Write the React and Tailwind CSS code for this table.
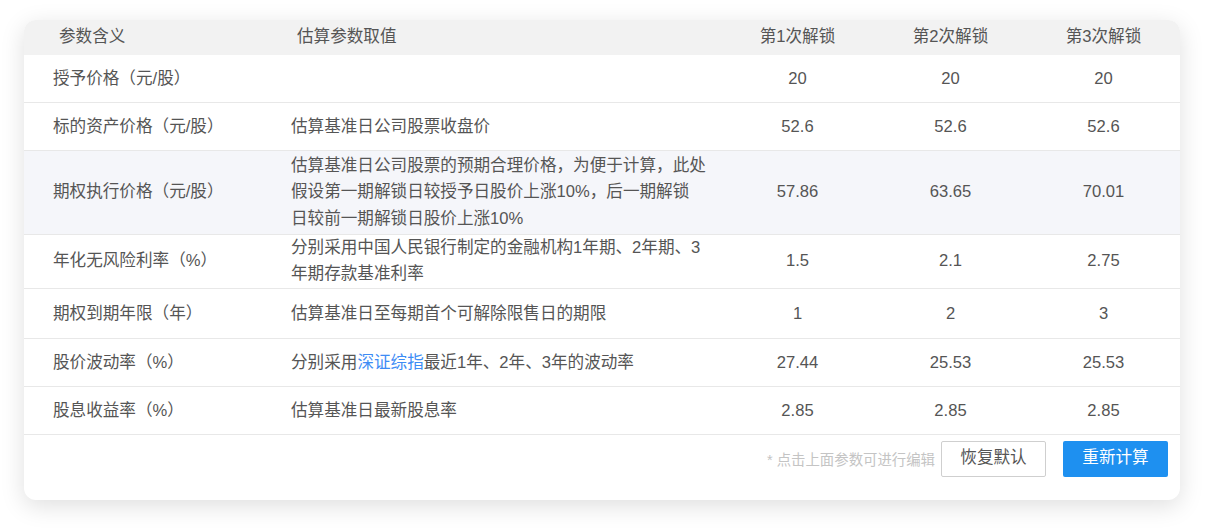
const rows = [
  { name: '授予价格（元/股）', desc: [], vals: ['20', '20', '20'] },
  { name: '标的资产价格（元/股）', desc: ['估算基准日公司股票收盘价'], vals: ['52.6', '52.6', '52.6'] },
  {
    name: '期权执行价格（元/股）',
    desc: [
      '估算基准日公司股票的预期合理价格，为便于计算，此处',
      '假设第一期解锁日较授予日股价上涨10%，后一期解锁',
      '日较前一期解锁日股价上涨10%',
    ],
    vals: ['57.86', '63.65', '70.01'],
    active: true,
  },
  {
    name: '年化无风险利率（%）',
    desc: ['分别采用中国人民银行制定的金融机构1年期、2年期、3', '年期存款基准利率'],
    vals: ['1.5', '2.1', '2.75'],
  },
  { name: '期权到期年限（年）', desc: ['估算基准日至每期首个可解除限售日的期限'], vals: ['1', '2', '3'], tall: true },
  { name: '股价波动率（%）', desc: ['link'], vals: ['27.44', '25.53', '25.53'] },
  { name: '股息收益率（%）', desc: ['估算基准日最新股息率'], vals: ['2.85', '2.85', '2.85'] },
];

const cols = 'grid grid-cols-[238px_459px_153px_153px_153px]';

export default function App() {
  return (
    <div className="min-h-[532px] bg-white pt-[20px] pl-[24px] font-['Liberation_Sans','Noto_Sans_CJK_SC',sans-serif] text-[16.6px] text-[#555]">
      <div className="w-[1156px] rounded-xl bg-white shadow-[0_6px_24px_rgba(0,0,0,0.13)] overflow-hidden">
        {/* Header */}
        <div className={`${cols} h-[35px] items-center bg-[#f2f2f2]`}>
          <div className="pl-[35px]">参数含义</div>
          <div className="pl-[35px]">估算参数取值</div>
          <div className="text-center">第1次解锁</div>
          <div className="text-center">第2次解锁</div>
          <div className="text-center">第3次解锁</div>
        </div>

        {rows.map((r) => (
          <div
            key={r.name}
            className={`${cols} items-center border-b border-[#e8e8e8] leading-[26.5px] ${r.tall ? 'min-h-[50px] pt-[2px]' : 'min-h-[48px]'} ${r.desc.length <= 1 && !r.tall ? 'pt-[2px]' : ''} ${r.active ? 'bg-[#f5f6fa] border-t border-t-[#e8e8e8] -mt-px py-[1.5px]' : ''}`}
          >
            <div className="pl-[29px]">{r.name}</div>
            <div className="pl-[29px]">
              {r.desc[0] === 'link' ? (
                <div className="whitespace-nowrap">
                  分别采用<span className="text-[#3d8cf5]">深证综指</span>最近1年、2年、3年的波动率
                </div>
              ) : (
                r.desc.map((d) => (
                  <div key={d} className="whitespace-nowrap">
                    {d}
                  </div>
                ))
              )}
            </div>
            {r.vals.map((v, i) => (
              <div key={i} className="text-center">
                {v}
              </div>
            ))}
          </div>
        ))}

        {/* Footer */}
        <div className="flex h-[65px] items-start justify-end pr-[12px] pt-[6px]">
          <span className="mt-[9px] mr-[6px] text-[14.4px] text-[#c4c4c4]">* 点击上面参数可进行编辑</span>
          <button className="h-[36px] w-[105px] rounded-[2px] border border-[#cfcfcf] bg-white text-[16.6px] text-[#555]">
            恢复默认
          </button>
          <button className="ml-[17px] h-[36px] w-[105px] rounded-[2px] bg-[#1e90f0] text-[16.6px] text-white">
            重新计算
          </button>
        </div>
      </div>
    </div>
  );
}
